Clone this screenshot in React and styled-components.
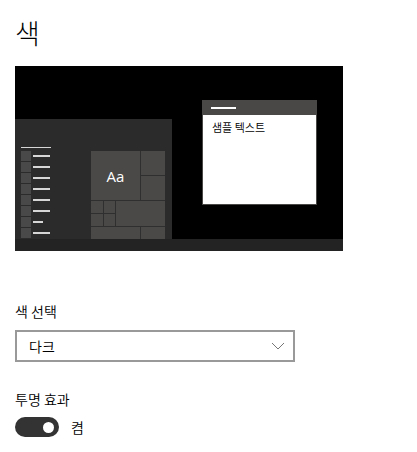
import React from "react";
import styled, { createGlobalStyle } from "styled-components";

const GlobalStyle = createGlobalStyle`
  body {
    margin: 0;
    background: #fff;
    font-family: "Noto Sans CJK KR", "Noto Sans", sans-serif;
    color: #000;
  }
`;

const Page = styled.div`
  width: 417px;
  height: 452px;
  padding: 0 15px;
  box-sizing: border-box;
  overflow: hidden;
  font-weight: 350;
`;

const Title = styled.h1`
  margin: 0;
  padding-top: 13px;
  font-size: 27px;
  font-weight: 300;
  line-height: 40px;
`;

const Preview = styled.div`
  position: relative;
  width: 328px;
  height: 185px;
  margin-top: 13px;
  background: #000;
  display: flex;
  flex-direction: column;
`;

const Desk = styled.div`
  flex: 1;
  display: flex;
  align-items: flex-end;
`;

const Taskbar = styled.div`
  height: 12px;
  background: #232323;
`;

const StartMenu = styled.div`
  width: 157px;
  height: 120px;
  box-sizing: border-box;
  padding: 28px 7px 0 6px;
  background: #2b2b2b;
  display: flex;
  overflow: hidden;
`;

const Column = styled.div`
  width: ${({ $w }) => $w}px;
  margin-left: ${({ $ml }) => $ml || 0}px;
  display: flex;
  flex-direction: column;
`;

const HeadLine = styled.div`
  width: 30px;
  height: 2px;
  background: #d6d6d6;
  margin-bottom: ${({ $mb }) => $mb}px;
`;

const ListItem = styled.div`
  display: flex;
  align-items: center;
  gap: 2px;
  height: 10px;
  margin-bottom: 1px;
`;

const Square = styled.div`
  width: 10px;
  height: 10px;
  background: #494949;
`;

const ItemLine = styled.div`
  width: ${({ $w }) => $w}px;
  height: 2px;
  background: #d6d6d6;
`;

const TileGrid = styled.div`
  display: grid;
  grid-template-columns: 12px 11px 24px 24px;
  grid-template-rows: 24px 24px 12px 12px 24px;
  gap: 1px;
  background: #2f2f2f;
`;

const Tile = styled.div`
  background: #4a4948;
  grid-column: ${({ $col }) => $col};
  grid-row: ${({ $row }) => $row};
  display: flex;
  align-items: center;
  justify-content: center;
  color: #fff;
  font-family: "Open Sans", "Noto Sans", sans-serif;
  font-weight: 400;
  font-size: 15px;
`;

const SampleWindow = styled.div`
  position: absolute;
  left: 187px;
  top: 34px;
  width: 115px;
  height: 105px;
  box-sizing: border-box;
  border: 1px solid #4a4846;
  background: #fff;
  display: flex;
  flex-direction: column;
`;

const WindowBar = styled.div`
  height: 14px;
  background: #4a4846;
  padding: 6px 0 0 8px;
  box-sizing: border-box;
`;

const BarLine = styled.div`
  width: 25px;
  height: 2px;
  background: #fff;
`;

const SampleText = styled.div`
  padding: 4px 0 0 9px;
  font-size: 11px;
  line-height: 16px;
`;

const Label = styled.div`
  margin-top: ${({ $mt }) => $mt}px;
  font-size: 14px;
  line-height: 20px;
`;

const Select = styled.div`
  width: 280px;
  height: 32px;
  box-sizing: border-box;
  margin-top: 9px;
  border: 2px solid #999;
  padding: 0 8px 0 12px;
  display: flex;
  align-items: center;
  justify-content: space-between;
  font-size: 14px;
`;

const ToggleRow = styled.div`
  margin-top: 8px;
  display: flex;
  align-items: center;
  gap: 12px;
  font-size: 14px;
`;

const Track = styled.div`
  width: 44px;
  height: 20px;
  border-radius: 10px;
  background: #333;
  display: flex;
  align-items: center;
  justify-content: ${({ $on }) => ($on ? "flex-end" : "flex-start")};
  padding: 0 5px;
  box-sizing: border-box;
`;

const Knob = styled.div`
  width: 11px;
  height: 11px;
  border-radius: 50%;
  background: #fff;
`;

const listLines = [17, 17, 17, 17, 17, 17, 10, 17];

const App = () => (
  <>
    <GlobalStyle />
    <Page>
      <Title>색</Title>
      <Preview>
        <Desk>
          <StartMenu>
            <Column $w={30}>
              <HeadLine $mb={3} />
              {listLines.map((w, i) => (
                <ListItem key={i}>
                  <Square />
                  <ItemLine $w={w} />
                </ListItem>
              ))}
            </Column>
            <Column $w={74} $ml={40}>
              <HeadLine $mb={4} />
              <TileGrid>
                <Tile $col="1 / 4" $row="1 / 3">Aa</Tile>
                <Tile $col="4" $row="1" />
                <Tile $col="4" $row="2" />
                <Tile $col="1" $row="3" />
                <Tile $col="2" $row="3" />
                <Tile $col="1" $row="4" />
                <Tile $col="2" $row="4" />
                <Tile $col="3 / 5" $row="3 / 5" />
                <Tile $col="1 / 4" $row="5" />
                <Tile $col="4" $row="5" />
              </TileGrid>
            </Column>
          </StartMenu>
        </Desk>
        <Taskbar />
        <SampleWindow>
          <WindowBar>
            <BarLine />
          </WindowBar>
          <SampleText>샘플 텍스트</SampleText>
        </SampleWindow>
      </Preview>
      <Label $mt={50}>색 선택</Label>
      <Select>
        <span>다크</span>
        <svg width="14" height="8" viewBox="0 0 14 8">
          <polyline points="1,1 7,7 13,1" fill="none" stroke="#777" strokeWidth="1" />
        </svg>
      </Select>
      <Label $mt={27}>투명 효과</Label>
      <ToggleRow>
        <Track $on>
          <Knob />
        </Track>
        <span>켬</span>
      </ToggleRow>
    </Page>
  </>
);

export default App;
